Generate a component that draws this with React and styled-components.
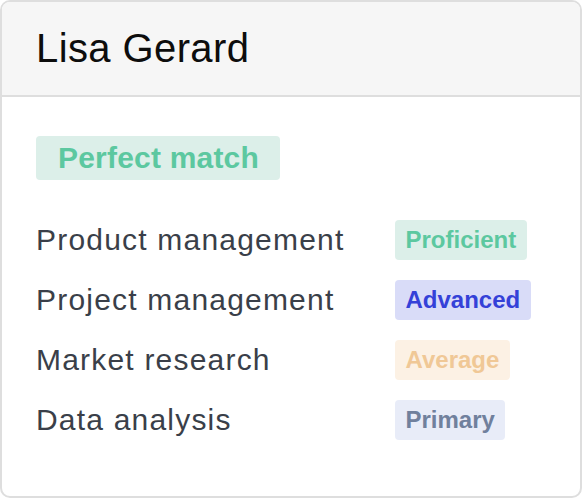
import React from "react";
import styled, { createGlobalStyle } from "styled-components";

const GlobalStyle = createGlobalStyle`
  body {
    margin: 0;
    background: #ffffff;
    font-family: "Liberation Sans", Arial, sans-serif;
  }
`;

const LevelColors = {
  proficient: { text: "#5cc8a0", bg: "#dcefe9" },
  advanced: { text: "#3441d8", bg: "#d9dcf8" },
  average: { text: "#f0c896", bg: "#fcf1e4" },
  primary: { text: "#70809d", bg: "#e8ecf8" },
};

const Card = styled.div`
  box-sizing: border-box;
  width: 582px;
  height: 498px;
  border: 2px solid #dedede;
  border-radius: 10px;
  overflow: hidden;
  background: #ffffff;
`;

const Header = styled.div`
  display: flex;
  align-items: center;
  height: 93px;
  padding: 0 34px;
  background: #f6f6f6;
  border-bottom: 2px solid #dedede;
`;

const Title = styled.h1`
  margin: 0;
  font-size: 40px;
  font-weight: 400;
  letter-spacing: 0.4px;
  color: #0d0d0d;
`;

const Body = styled.div`
  padding: 39px 34px 0;
`;

const MatchBadge = styled.div`
  display: inline-flex;
  align-items: center;
  height: 44px;
  padding: 0 21px 0 22px;
  border-radius: 4px;
  background: #dcefe9;
  color: #5cc8a0;
  font-size: 30px;
  font-weight: 700;
  letter-spacing: 0.2px;
  margin-bottom: 40px;
`;

const SkillList = styled.div`
  display: grid;
  grid-template-columns: 359px auto;
  row-gap: 20px;
  align-items: center;
  justify-items: start;
`;

const SkillName = styled.div`
  font-size: 30px;
  letter-spacing: 1.2px;
  color: #3a3f49;
`;

const LevelBadge = styled.div`
  display: inline-flex;
  align-items: center;
  height: 40px;
  padding: 0 10.5px;
  border-radius: 4px;
  font-size: 24px;
  font-weight: 700;
  color: ${(p) => LevelColors[p.$level].text};
  background: ${(p) => LevelColors[p.$level].bg};
`;

const skills = [
  { name: "Product management", level: "proficient", label: "Proficient" },
  { name: "Project management", level: "advanced", label: "Advanced" },
  { name: "Market research", level: "average", label: "Average" },
  { name: "Data analysis", level: "primary", label: "Primary" },
];

export default function App() {
  return (
    <>
      <GlobalStyle />
      <Card>
        <Header>
          <Title>Lisa Gerard</Title>
        </Header>
        <Body>
          <MatchBadge>Perfect match</MatchBadge>
          <SkillList>
            {skills.map((s) => (
              <React.Fragment key={s.name}>
                <SkillName>{s.name}</SkillName>
                <LevelBadge $level={s.level}>{s.label}</LevelBadge>
              </React.Fragment>
            ))}
          </SkillList>
        </Body>
      </Card>
    </>
  );
}
